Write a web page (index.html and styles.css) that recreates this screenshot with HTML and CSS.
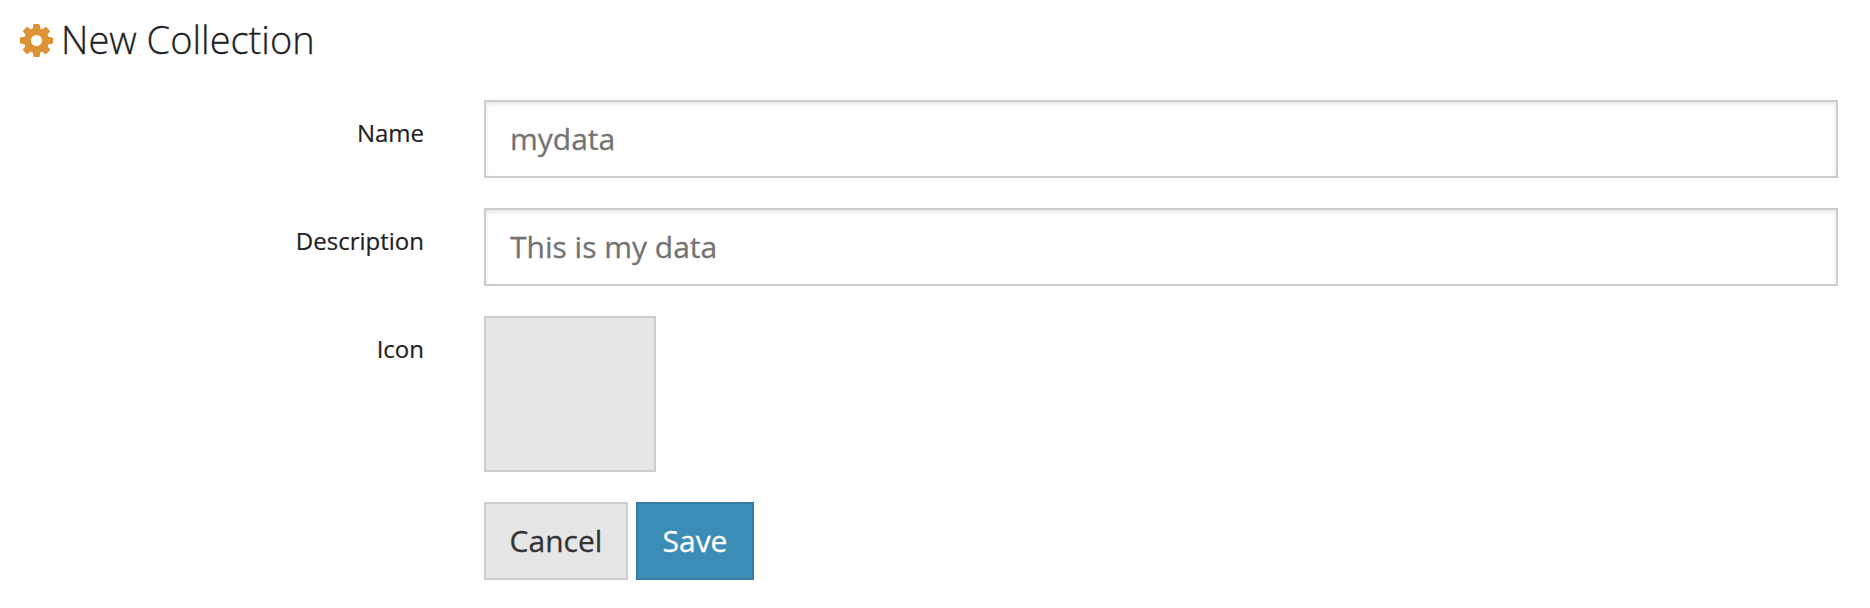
FILE: index.html
```html
<!DOCTYPE html>
<html lang="en">
<head>
<meta charset="utf-8">
<title>New Collection</title>
<link rel="stylesheet" href="styles.css">
</head>
<body>
<main class="page">
  <h1 class="title">
    <svg class="cog" viewBox="0 0 1536 1536" aria-hidden="true"><path transform="translate(0 1408) scale(1 -1)" d="M1024 640q0 106 -75 181t-181 75t-181 -75t-75 -181t75 -181t181 -75t181 75t75 181zM1536 749v-222q0 -12 -8 -23t-20 -13l-185 -28q-19 -54 -39 -91q35 -50 107 -138q10 -12 10 -25t-9 -23q-27 -37 -99 -108t-94 -71q-12 0 -26 9l-138 108q-44 -23 -91 -38q-16 -136 -29 -186q-7 -28 -36 -28h-222q-14 0 -24.5 8.5t-11.5 21.5l-28 184q-49 16 -90 37l-141 -107q-10 -9 -25 -9q-14 0 -25 11q-126 114 -165 168q-7 10 -7 23q0 12 8 23q15 21 51 66.5t54 70.5q-27 50 -41 99l-183 27q-13 2 -21 12.5t-8 23.5v222q0 12 8 23t19 13l186 28q14 46 39 92q-40 57 -107 138q-10 12 -10 24q0 10 9 23q26 36 98.5 107.5t94.5 71.5q13 0 26 -10l138 -107q44 23 91 38q16 136 29 186q7 28 36 28h222q14 0 24.5 -8.5t11.5 -21.5l28 -184q49 -16 90 -37l142 107q9 9 24 9q13 0 25 -10q129 -119 165 -170q7 -8 7 -22q0 -12 -8 -23q-15 -21 -51 -66.5t-54 -70.5q26 -50 41 -98l183 -28q13 -2 21 -12.5t8 -23.5z"/></svg>
    <span class="title-text">New Collection</span>
  </h1>
  <form class="form">
    <label class="label" for="name">Name</label>
    <input class="input" id="name" type="text" placeholder="mydata">
    <label class="label" for="description">Description</label>
    <input class="input" id="description" type="text" placeholder="This is my data">
    <span class="label">Icon</span>
    <button class="icon-picker" type="button" aria-label="Choose icon"></button>
    <div class="actions">
      <button class="button" type="button">Cancel</button>
      <button class="button button-primary" type="button">Save</button>
    </div>
  </form>
</main>
</body>
</html>
```
FILE: styles.css
```css
* {
  box-sizing: border-box;
}

body {
  margin: 0;
  background: #fff;
  color: #222;
  font-family: "Open Sans", "Noto Sans", sans-serif;
}

.page {
  padding: 12px 32px 0 20px;
}

.title {
  display: flex;
  align-items: center;
  gap: 8px;
  height: 56px;
  margin: 0 0 32px;
  font-size: 38px;
  font-weight: 300;
  line-height: 56px;
}

.title-text {
  padding-bottom: 2px;
  -webkit-text-stroke: 0.3px #222;
}

.cog {
  width: 33px;
  height: 33px;
  fill: #dd9233;
}

.form {
  display: grid;
  grid-template-columns: 404px 1fr;
  column-gap: 60px;
  row-gap: 30px;
}

.label {
  padding-top: 16px;
  font-size: 24px;
  line-height: 34px;
  text-align: right;
  -webkit-text-stroke: 0.2px #222;
}

.input,
.button,
.icon-picker {
  margin: 0;
  border: 2px solid #ccc;
  border-radius: 0;
  font: 400 30px/42px "Open Sans", "Noto Sans", sans-serif;
  -webkit-text-stroke: 0.3px currentColor;
}

.input {
  width: 100%;
  height: 78px;
  padding: 0 24px 2px;
  background: #fff;
  box-shadow: inset 0 2px 4px rgba(0, 0, 0, 0.1);
  color: #333;
}

.input::placeholder {
  color: #737373;
  opacity: 1;
  -webkit-text-stroke: 0.3px #737373;
}

.icon-picker {
  width: 172px;
  height: 156px;
  background: #e6e6e6;
}

.actions {
  display: flex;
  grid-column: 2;
  gap: 8px;
}

.button {
  width: 144px;
  height: 78px;
  padding: 0;
  background: #e6e6e6;
  color: #333;
}

.button-primary {
  width: 118px;
  border-color: #357ca3;
  background: #3c8cb8;
  color: #fff;
}
```
